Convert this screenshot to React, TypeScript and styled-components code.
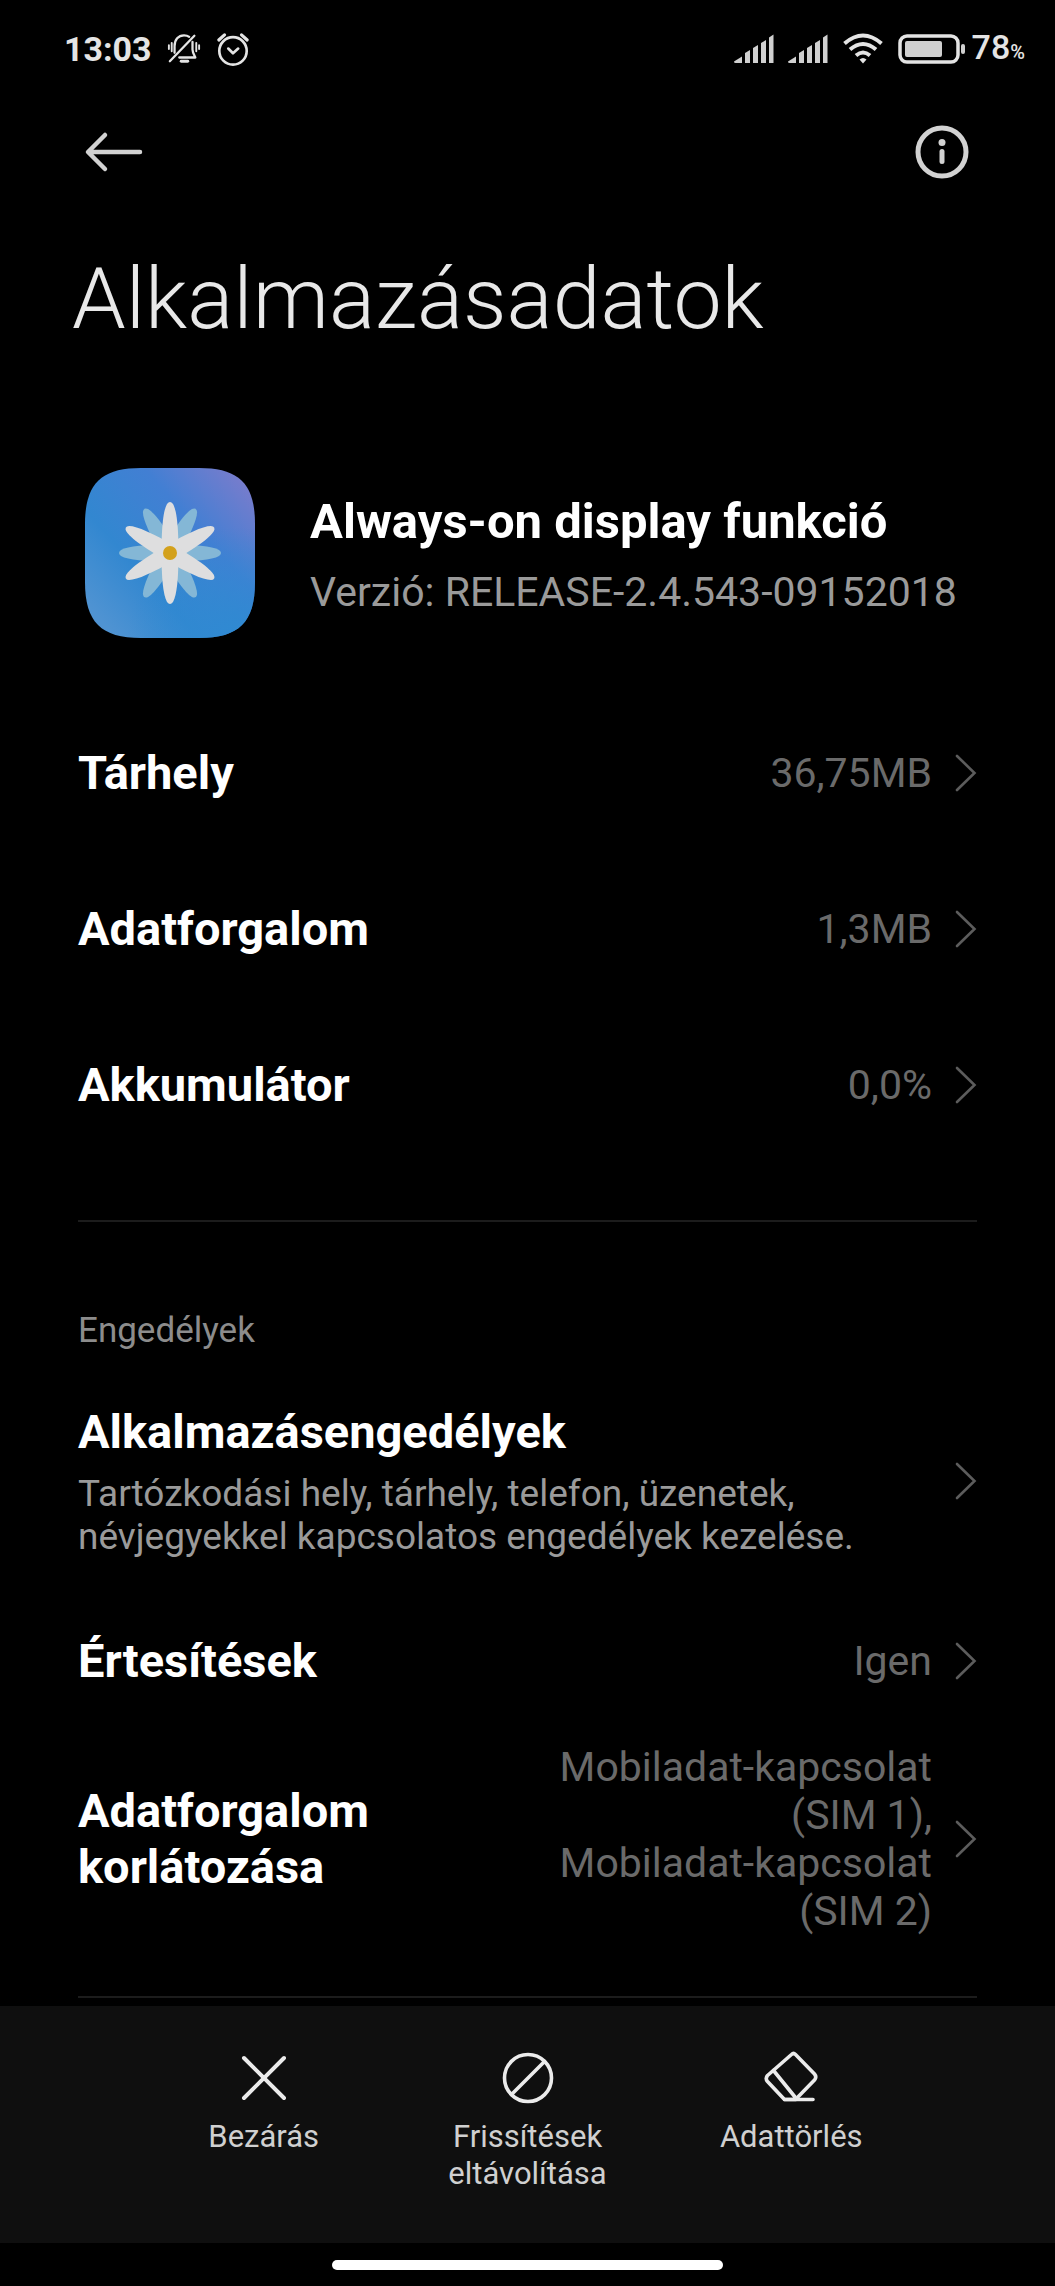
import React from "react";
import styled, { createGlobalStyle } from "styled-components";

const GlobalStyle = createGlobalStyle`
  *, *::before, *::after { box-sizing: border-box; }
  body {
    margin: 0;
    background: #000;
    color: #fff;
    font-family: Roboto, "Noto Sans", sans-serif;
  }
  h1, h2, p { margin: 0; }
`;

const Screen = styled.div`
  display: flex;
  flex-direction: column;
  min-height: 100vh;
`;

const StatusBar = styled.div`
  display: flex;
  align-items: center;
  justify-content: space-between;
  height: 98px;
  padding: 0 30px 0 64px;
  color: #e4e4e4;
`;

const StatusGroup = styled.div<{ $gap: number }>`
  display: flex;
  align-items: center;
  gap: ${(p) => p.$gap}px;
`;

const Clock = styled.time`
  font-size: 34px;
  font-weight: 700;
  line-height: 40px;
`;

const BatteryText = styled.span`
  font-size: 34px;
  font-weight: 500;
  line-height: 40px;
`;

const Percent = styled.span`
  font-size: 20px;
`;

const Icon = styled.svg`
  display: block;
  flex: none;
  fill: none;
  stroke: currentColor;
  stroke-linecap: round;
  stroke-linejoin: round;
`;

const Toolbar = styled.header`
  display: flex;
  align-items: center;
  justify-content: space-between;
  height: 108px;
  padding: 0 84px;
`;

const IconButton = styled.button`
  display: flex;
  padding: 0;
  border: 0;
  background: none;
  color: #d2d2d2;
  cursor: pointer;
`;

const PageTitle = styled.h1`
  padding: 42px 72px 0;
  color: #e8e8e8;
  font-size: 86px;
  font-weight: 300;
  line-height: 102px;
`;

const Content = styled.main`
  flex: 1;
  padding: 0 78px 8px;
`;

const AppSummary = styled.section`
  display: flex;
  align-items: center;
  gap: 55px;
  padding: 118px 0 57px 7px;
`;

const AppHeading = styled.div`
  padding-top: 4px;
`;

const AppName = styled.h2`
  font-size: 49px;
  font-weight: 700;
  line-height: 56px;
`;

const Version = styled.p`
  margin-top: 18px;
  color: #9a9a9a;
  font-size: 41px;
  line-height: 48px;
`;

const Row = styled.a<{ $pad?: number }>`
  display: flex;
  align-items: center;
  min-height: 156px;
  padding: ${(p) => p.$pad ?? 4}px 0;
  color: inherit;
  text-decoration: none;
`;

const RowText = styled.div`
  flex: 1;
`;

const Label = styled.div`
  font-size: 47px;
  font-weight: 700;
  line-height: 56px;
`;

const Description = styled.p`
  margin-top: 12px;
  color: #9a9a9a;
  font-size: 37px;
  line-height: 43px;
`;

const Value = styled.div`
  max-width: 45%;
  margin-right: 23px;
  color: #6a6a6a;
  font-size: 41px;
  line-height: 48px;
  text-align: right;
`;

const Unbroken = styled.span`
  white-space: nowrap;
`;

const ChevronIcon = styled(Icon)`
  color: #5c5c5c;
`;

const Divider = styled.hr`
  height: 2px;
  margin: 57px 0 0;
  border: 0;
  background: #1c1c1c;
`;

const SectionTitle = styled.h2`
  padding: 88px 0 28px;
  color: #8c8c8c;
  font-size: 35px;
  font-weight: 400;
  line-height: 41px;
`;

const ActionBar = styled.footer`
  display: grid;
  grid-template-columns: repeat(3, 1fr);
  padding: 44px 12.5% 51px;
  background: #0f0f0f;
`;

const Action = styled.button`
  display: flex;
  flex-direction: column;
  align-items: center;
  gap: 12px;
  padding: 0 40px;
  border: 0;
  background: none;
  color: #ebebeb;
  font: inherit;
  cursor: pointer;
`;

const ActionLabel = styled.span`
  color: #d0d0d0;
  font-size: 31px;
  line-height: 37px;
`;

const NavArea = styled.div`
  display: flex;
  align-items: center;
  justify-content: center;
  height: 44px;
`;

const HomeIndicator = styled.div`
  width: 37%;
  height: 10px;
  border-radius: 5px;
  background: #fff;
`;

function SilentIcon() {
  return (
    <Icon width="34" height="34" viewBox="0 0 36 36" strokeWidth="2.4" aria-hidden="true">
      <path d="M8 22V15C8 8 12 3.500 18 3.500c2 0 4 .5 5.500 1.700M27 10.500v8c0 3 1.200 5 3 8.500H13" />
      <path d="M3 31 29 4" />
      <path d="M15 31h7" strokeWidth="3" />
      <path d="M2 14v4M5 11.500v9M34 14v4M31 11.500v9" strokeWidth="2" />
    </Icon>
  );
}

function AlarmIcon() {
  return (
    <Icon width="34" height="34" viewBox="0 0 36 36" strokeWidth="2.800" aria-hidden="true">
      <circle cx="18" cy="20" r="14.500" />
      <path d="M13 17.500l5 5 5.500-5" />
      <path d="M3 8.500 9 3M33 8.500 27 3" strokeWidth="3.400" />
    </Icon>
  );
}

function SignalIcon() {
  return (
    <svg width="40" height="30" viewBox="0 0 40 30" fill="#d0d0d0" aria-hidden="true">
      <path d="M0 27.500 8 22.500V29H1.500Q0 29 0 27.500Z" />
      <path d="M11 19l5-3V29H11Z" />
      <path d="M19 14l5-3V29H19Z" />
      <path d="M27 9l5-3V29H27Z" />
      <path d="M35 3.500 39.500 0.500V29H35Z" />
    </svg>
  );
}

function WifiIcon() {
  return (
    <Icon width="42" height="32" viewBox="0 0 42 32" strokeWidth="4" aria-hidden="true">
      <path d="M2.500 10.500Q21-5.500 39.500 10.500" strokeLinecap="butt" />
      <path d="M8 16.500Q21 5.500 34 16.500" strokeLinecap="butt" />
      <path d="M14 22.500Q21 16.500 28 22.500" strokeLinecap="butt" />
      <path d="M17.500 26.500Q21 23.500 24.500 26.500L21 30.500Z" fill="currentColor" stroke="none" />
    </Icon>
  );
}

function BatteryIcon() {
  return (
    <Icon width="68" height="30" viewBox="0 0 68 30" strokeWidth="3.500" aria-hidden="true">
      <rect x="2" y="2" width="58" height="26" rx="7" />
      <rect x="7" y="7" width="37" height="16" rx="2" fill="#d0d0d0" stroke="none" />
      <rect x="63" y="10" width="4" height="10" rx="2" fill="#d0d0d0" stroke="none" />
    </Icon>
  );
}

function Chevron() {
  return (
    <ChevronIcon width="22" height="38" viewBox="0 0 22 38" strokeWidth="2.600" aria-hidden="true">
      <path d="M2 2l17.500 17L2 36" strokeLinejoin="miter" />
    </ChevronIcon>
  );
}

const TILE = "M0 56C0 16 16 0 56 0h58c40 0 56 16 56 56v58c0 40-16 56-56 56H56C16 170 0 154 0 114Z";
const PETAL = "M-8.500 0C-8.500-24-7-42-3-49Q0-53 3-49C7-42 8.500-24 8.500 0Z";

function FlowerIcon() {
  return (
    <Icon as="svg" width="170" height="170" viewBox="0 0 170 170" strokeWidth="0" aria-hidden="true">
      <defs>
        <linearGradient id="sky" x1="0.1" y1="0.9" x2="1" y2="0.1">
          <stop offset="0" stopColor="#4f93d2" />
          <stop offset="0.3" stopColor="#3287d0" />
          <stop offset="0.65" stopColor="#427fd3" />
          <stop offset="1" stopColor="#7b7ccc" />
        </linearGradient>
        <radialGradient id="shore" cx="0.9" cy="1" r="0.65">
          <stop offset="0" stopColor="#2f8ad2" />
          <stop offset="1" stopColor="#2f8ad2" stopOpacity="0" />
        </radialGradient>
      </defs>
      <path d={TILE} fill="url(#sky)" />
      <path d={TILE} fill="url(#shore)" />
      <g transform="translate(85 85)">
        {[30, 90, 150, 210, 270, 330].map((a) => (
          <path key={a} d={PETAL} fill="#84b7d6" transform={`rotate(${a})`} />
        ))}
        {[0, 60, 120, 180, 240, 300].map((a) => (
          <path key={a} d={PETAL} fill="#dededf" transform={`rotate(${a})`} />
        ))}
        <circle r="7" fill="#d3a11c" />
      </g>
    </Icon>
  );
}

type SettingProps = {
  label: string;
  value?: React.ReactNode;
  description?: string;
  pad?: number;
};

function Setting({ label, value, description, pad }: SettingProps) {
  return (
    <Row href="#" $pad={pad}>
      <RowText>
        <Label>{label}</Label>
        {description && <Description>{description}</Description>}
      </RowText>
      {value && <Value>{value}</Value>}
      <Chevron />
    </Row>
  );
}

export default function App() {
  return (
    <Screen>
      <GlobalStyle />
      <StatusBar>
        <StatusGroup $gap={15}>
          <Clock>13:03</Clock>
          <SilentIcon />
          <AlarmIcon />
        </StatusGroup>
        <StatusGroup $gap={14}>
          <SignalIcon />
          <SignalIcon />
          <WifiIcon />
          <StatusGroup $gap={6}>
            <BatteryIcon />
            <BatteryText>
              78<Percent>%</Percent>
            </BatteryText>
          </StatusGroup>
        </StatusGroup>
      </StatusBar>

      <Toolbar>
        <IconButton type="button" aria-label="Vissza">
          <Icon width="60" height="44" viewBox="0 0 60 44" strokeWidth="4.500">
            <path d="M21 5 4 22l17 17M5 22h51" />
          </Icon>
        </IconButton>
        <IconButton type="button" aria-label="Információ">
          <Icon width="58" height="58" viewBox="0 0 58 58" strokeWidth="5">
            <circle cx="29" cy="29" r="24" />
            <path d="M29 28.500v10" />
            <circle cx="29" cy="19.500" r="3.500" fill="currentColor" stroke="none" />
          </Icon>
        </IconButton>
      </Toolbar>

      <PageTitle>Alkalmazásadatok</PageTitle>

      <Content>
        <AppSummary>
          <FlowerIcon />
          <AppHeading>
            <AppName>Always-on display funkció</AppName>
            <Version>Verzió: RELEASE-2.4.543-09152018</Version>
          </AppHeading>
        </AppSummary>

        <Setting label="Tárhely" value="36,75MB" />
        <Setting label="Adatforgalom" value="1,3MB" />
        <Setting label="Akkumulátor" value="0,0%" />
        <Divider />

        <SectionTitle>Engedélyek</SectionTitle>
        <Setting
          label="Alkalmazásengedélyek"
          description="Tartózkodási hely, tárhely, telefon, üzenetek, névjegyekkel kapcsolatos engedélyek kezelése."
          pad={25}
        />
        <Setting label="Értesítések" value="Igen" />
        <Setting
          label="Adatforgalom korlátozása"
          value={
            <>
              <Unbroken>Mobiladat-kapcsolat</Unbroken> (SIM 1), <Unbroken>Mobiladat-kapcsolat</Unbroken> (SIM 2)
            </>
          }
        />
        <Divider />
      </Content>

      <ActionBar>
        <Action type="button">
          <Icon width="56" height="56" viewBox="0 0 56 56" strokeWidth="4">
            <path d="M8 8l40 40M48 8 8 48" />
          </Icon>
          <ActionLabel>Bezárás</ActionLabel>
        </Action>
        <Action type="button">
          <Icon width="56" height="56" viewBox="0 0 56 56" strokeWidth="3.600">
            <circle cx="28" cy="28" r="23.500" />
            <path d="M11.500 44.500l33-33" />
          </Icon>
          <ActionLabel>Frissítések eltávolítása</ActionLabel>
        </Action>
        <Action type="button">
          <Icon width="56" height="56" viewBox="0 0 56 56" strokeWidth="3.600">
            <path d="M28.500 4.500Q30.500 2.500 32.500 4.500L51.500 24Q54 27 51.500 30L32.500 49.500H21.500L4.500 31.500Q2 28.500 4.500 25.500Z" />
            <path d="M10.500 20.500 32 47M21.500 49.500H50" />
          </Icon>
          <ActionLabel>Adattörlés</ActionLabel>
        </Action>
      </ActionBar>

      <NavArea>
        <HomeIndicator />
      </NavArea>
    </Screen>
  );
}
